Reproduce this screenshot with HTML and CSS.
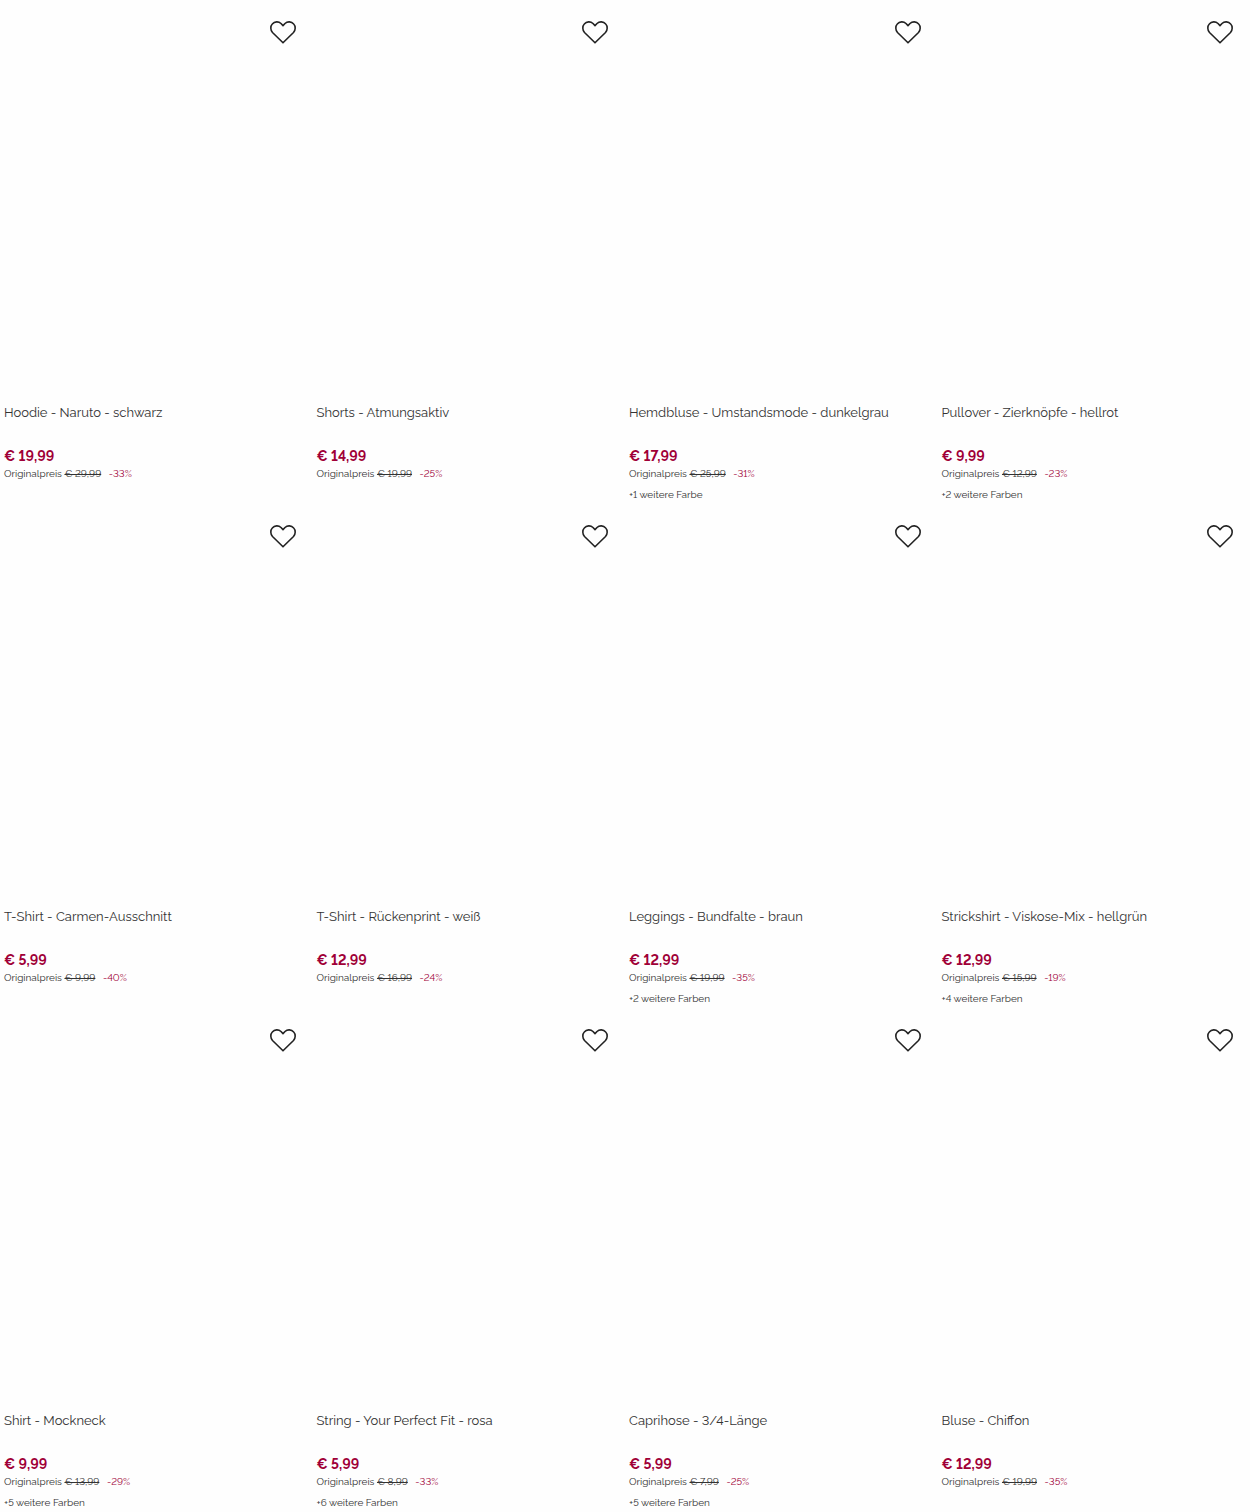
FILE: index.html
```html
<!DOCTYPE html>
<html lang="de">

<head>
    <meta charset="UTF-8">
    <meta name="viewport" content="width=device-width, initial-scale=1.0">
    <title>Produkte</title>
    <link rel="stylesheet" href="styles.css">
</head>

<body>

    <main class="product-grid" id="productGrid"></main>

    <script src="script.js"></script>
</body>

</html>
```
FILE: styles.css
```css
/* Basic styling */
* {
    box-sizing: border-box;
}

body {
    font-family: Raleway, 'Lato', sans-serif;
    font-variant-numeric: lining-nums;
    background-color: #fefefe;
    color: #333;
    margin: 0;
}

/* Product grid */
.product-grid {
    display: grid;
    grid-template-columns: repeat(4, 1fr);
}

.product {
    position: relative;
    min-width: 0;
}

.product-image {
    display: block;
    aspect-ratio: 25 / 32;
}

.wish-button {
    position: absolute;
    top: 16px;
    right: 12px;
    width: 36px;
    height: 32px;
    padding: 4px;
    border: none;
    background: none;
    color: #222;
    cursor: pointer;
}

.wish-button svg {
    display: block;
    width: 28px;
    height: 24px;
}

.product-info {
    padding: 2px 4px 1px;
}

.product-title {
    min-height: 45px;
    margin: 0;
    font-size: 13px;
    font-weight: 400;
    line-height: 22px;
}

.product-title a {
    color: inherit;
    text-decoration: none;
}

.price {
    margin: 0;
    color: #a00037;
    font-size: 14px;
    font-weight: 700;
    line-height: 18px;
}

.original-price {
    margin: 0;
    font-size: 10px;
    line-height: 18px;
}

.discount {
    margin-left: 5px;
    color: #a00037;
}

.colors {
    min-height: 20px;
    margin: 0;
    padding-top: 4px;
    font-size: 10px;
    line-height: 16px;
}
```
FILE: script.js
```js
const products = [
    { title: 'Hoodie - Naruto - schwarz', price: '19,99', original: '29,99', discount: '-33%', colors: '' },
    { title: 'Shorts - Atmungsaktiv', price: '14,99', original: '19,99', discount: '-25%', colors: '' },
    { title: 'Hemdbluse - Umstandsmode - dunkelgrau', price: '17,99', original: '25,99', discount: '-31%', colors: '+1 weitere Farbe' },
    { title: 'Pullover - Zierknöpfe - hellrot', price: '9,99', original: '12,99', discount: '-23%', colors: '+2 weitere Farben' },
    { title: 'T-Shirt - Carmen-Ausschnitt', price: '5,99', original: '9,99', discount: '-40%', colors: '' },
    { title: 'T-Shirt - Rückenprint - weiß', price: '12,99', original: '16,99', discount: '-24%', colors: '' },
    { title: 'Leggings - Bundfalte - braun', price: '12,99', original: '19,99', discount: '-35%', colors: '+2 weitere Farben' },
    { title: 'Strickshirt - Viskose-Mix - hellgrün', price: '12,99', original: '15,99', discount: '-19%', colors: '+4 weitere Farben' },
    { title: 'Shirt - Mockneck', price: '9,99', original: '13,99', discount: '-29%', colors: '+5 weitere Farben' },
    { title: 'String - Your Perfect Fit - rosa', price: '5,99', original: '8,99', discount: '-33%', colors: '+6 weitere Farben' },
    { title: 'Caprihose - 3/4-Länge', price: '5,99', original: '7,99', discount: '-25%', colors: '+5 weitere Farben' },
    { title: 'Bluse - Chiffon', price: '12,99', original: '19,99', discount: '-35%', colors: '' }
];

// Build one product card
function renderProduct(product) {
    return `
        <article class="product">
            <a class="product-image" href="#" aria-label="${product.title}"></a>
            <button class="wish-button" type="button" aria-label="Auf den Wunschzettel">
                <svg viewBox="0 0 28 24" fill="none" stroke="currentColor" stroke-width="1.6" stroke-linejoin="round">
                    <path d="M14 22.8 3.5 12.5C1.4 10.2 1.2 6.2 3.3 4 5.6 1.3 9.6 1.2 12 3.5L14 5.6 16 3.5C18.4 1.2 22.4 1.3 24.7 4 26.8 6.2 26.6 10.2 24.5 12.5Z"/>
                </svg>
            </button>
            <div class="product-info">
                <h2 class="product-title"><a href="#">${product.title}</a></h2>
                <p class="price">€ ${product.price}</p>
                <p class="original-price">Originalpreis <s>€ ${product.original}</s> <span class="discount">${product.discount}</span></p>
                <p class="colors">${product.colors}</p>
            </div>
        </article>`;
}

document.getElementById('productGrid').innerHTML = products.map(renderProduct).join('');
```
